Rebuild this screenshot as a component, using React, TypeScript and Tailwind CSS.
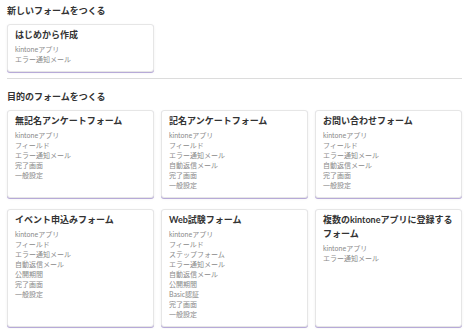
type FormCard = {
  title: string;
  items: string[];
};

const templates: FormCard[] = [
  {
    title: "無記名アンケートフォーム",
    items: ["kintoneアプリ", "フィールド", "エラー通知メール", "完了画面", "一般設定"],
  },
  {
    title: "記名アンケートフォーム",
    items: ["kintoneアプリ", "フィールド", "エラー通知メール", "自動返信メール", "完了画面", "一般設定"],
  },
  {
    title: "お問い合わせフォーム",
    items: ["kintoneアプリ", "フィールド", "エラー通知メール", "自動返信メール", "完了画面", "一般設定"],
  },
  {
    title: "イベント申込みフォーム",
    items: ["kintoneアプリ", "フィールド", "エラー通知メール", "自動返信メール", "公開期間", "完了画面", "一般設定"],
  },
  {
    title: "Web試験フォーム",
    items: [
      "kintoneアプリ",
      "フィールド",
      "ステップフォーム",
      "エラー通知メール",
      "自動返信メール",
      "公開期間",
      "Basic認証",
      "完了画面",
      "一般設定",
    ],
  },
  {
    title: "複数のkintoneアプリに登録するフォーム",
    items: ["kintoneアプリ", "エラー通知メール"],
  },
];

function Card({ card, className = "" }: { card: FormCard; className?: string }) {
  return (
    <div
      className={`rounded-[3px] border border-[#e6e6e6] bg-white px-[7px] pt-[3px] pb-[7px] shadow-[0_1px_0_#b7aad8,0_1px_3px_rgba(0,0,0,0.06)] ${className}`}
    >
      <div className="text-[9px] font-bold leading-[14px] text-[#333]">{card.title}</div>
      <ul className="mt-[2px]">
        {card.items.map((item) => (
          <li key={item} className="text-[7px] leading-[10px] text-[#8a8a8a]">
            {item}
          </li>
        ))}
      </ul>
    </div>
  );
}

export default function App() {
  return (
    <div className="h-[329px] w-[469px] overflow-hidden bg-white px-[7px] font-['Lato','Noto_Sans_CJK_JP',sans-serif]">
      {/* New form */}
      <h2 className="pt-[5px] text-[9px] font-bold leading-[12px] text-[#333]">新しいフォームをつくる</h2>
      <div className="mt-[7px] w-[147px]">
        <Card
          className="h-[48px] pt-[3px]"
          card={{ title: "はじめから作成", items: ["kintoneアプリ", "エラー通知メール"] }}
        />
      </div>

      <div className="mt-[6px] h-px bg-[#dcdcdc]" />

      {/* Template forms */}
      <h2 className="mt-[12px] text-[9px] font-bold leading-[12px] text-[#333]">目的のフォームをつくる</h2>
      <div className="mt-[7px] grid grid-cols-3 gap-x-[7px] gap-y-[11px]">
        {templates.map((t) => (
          <Card key={t.title} card={t} />
        ))}
      </div>
    </div>
  );
}
